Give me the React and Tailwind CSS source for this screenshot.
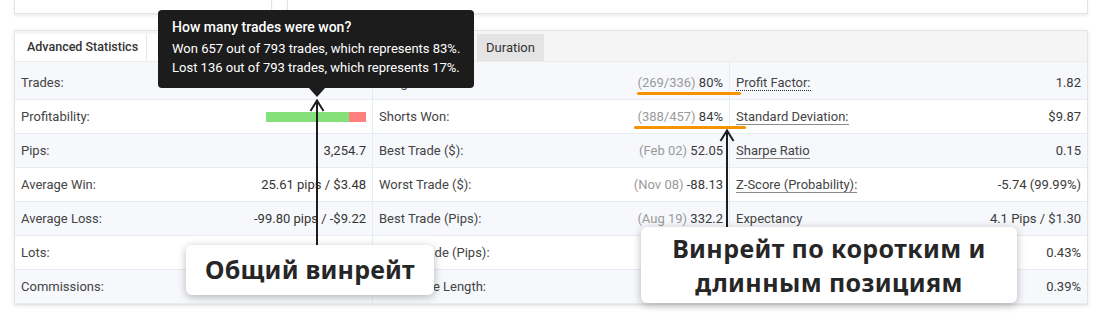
import React from 'react';

const leftRows = [
  { label: 'Trades:', value: '' },
  { label: 'Profitability:', bar: true },
  { label: 'Pips:', value: '3,254.7' },
  { label: 'Average Win:', value: '25.61 pips / $3.48' },
  { label: 'Average Loss:', value: '-99.80 pips / -$9.22' },
  { label: 'Lots:', value: '' },
  { label: 'Commissions:', value: '' },
];

const midRows = [
  { label: 'Longs Won:', note: '(269/336)', value: '80%' },
  { label: 'Shorts Won:', note: '(388/457)', value: '84%' },
  { label: 'Best Trade ($):', note: '(Feb 02)', value: '52.05' },
  { label: 'Worst Trade ($):', note: '(Nov 08)', value: '-88.13' },
  { label: 'Best Trade (Pips):', note: '(Aug 19)', value: '332.2' },
  { label: 'Worst Trade (Pips):', note: '', value: '' },
  { label: 'Avg. Trade Length:', note: '', value: '' },
];

const rightRows = [
  { label: 'Profit Factor:', value: '1.82', line: 'dotted' },
  { label: 'Standard Deviation:', value: '$9.87', line: 'solid' },
  { label: 'Sharpe Ratio', value: '0.15', line: 'solid' },
  { label: 'Z-Score (Probability):', value: '-5.74 (99.99%)', line: 'solid' },
  { label: 'Expectancy', value: '4.1 Pips / $1.30' },
  { label: '', value: '0.43%' },
  { label: '', value: '0.39%' },
];

const Row = ({ i, children }) => (
  <div
    className={`flex items-center justify-between px-[6px] border-b border-[#e7ebf2] ${
      i === 0 ? 'h-[38px] pt-[4px]' : 'h-[34px]'
    } ${i % 2 === 0 ? 'bg-[#f6f8fc]' : 'bg-white'}`}
  >
    {children}
  </div>
);

const Label = ({ text, line }) => {
  if (line === 'dotted')
    return <span className="border-b border-dotted border-[#333] leading-[15px]">{text}</span>;
  if (line === 'solid')
    return <span className="border-b border-[#8a8a8a] leading-[15px]">{text}</span>;
  return <span>{text}</span>;
};

const Arrow = ({ className, height }) => (
  <svg className={className} width="16" height={height} viewBox={`0 0 16 ${height}`}>
    <line x1="8" y1="1" x2="8" y2={height} stroke="#1e1e1e" strokeWidth="2" />
    <polyline points="1.5,12 8,1.5 14.5,12" fill="none" stroke="#1e1e1e" strokeWidth="2" />
  </svg>
);

export default function App() {
  return (
    <div className="relative w-[1094px] h-[316px] bg-white overflow-hidden font-['Roboto',sans-serif] text-[13px] text-[#444]">
      {/* cards above, cut off */}
      <div className="flex gap-[15px] pl-[14px] h-[14px]">
        <div className="w-[258px] bg-white border-x border-b border-[#e4e4e4] shadow-[0_2px_3px_rgba(0,0,0,0.08)]" />
        <div className="w-[801px] bg-white border-x border-b border-[#e4e4e4] shadow-[0_2px_3px_rgba(0,0,0,0.08)]" />
      </div>

      {/* stats panel */}
      <div className="ml-[14px] mt-[16px] w-[1074px] border border-[#e4e4e4] bg-white shadow-[0_1px_4px_rgba(0,0,0,0.1)]">
        <div className="flex items-end h-[31px] bg-[#f5f5f5] border-b border-[#ececec]">
          <div className="h-[27px] w-[132px] flex items-center pl-[12px] bg-white border-r border-[#e8e8e8] text-[#333] text-[12.5px] font-medium">
            Advanced Statistics
          </div>
          <div className="h-[27px] w-[80px] flex items-center pl-[11px] bg-white text-[#333]">Trades</div>
          <div className="h-[27px] w-[250px]" />
          <div className="h-[27px] w-[67px] flex items-center justify-center bg-[#e4e4e4] text-[#333]">Duration</div>
        </div>

        <div className="grid grid-cols-[357px_357px_358px]">
          <div>
            {leftRows.map((r, i) => (
              <Row key={r.label} i={i}>
                <span>{r.label}</span>
                {r.bar ? (
                  <div className="flex w-[100px] h-[10px]">
                    <div className="w-[83px] bg-[#86e07a]" />
                    <div className="flex-1 bg-[#ff7f7f]" />
                  </div>
                ) : (
                  <span className="text-[#333]">{r.value}</span>
                )}
              </Row>
            ))}
          </div>
          <div className="border-l border-[#e7ebf2]">
            {midRows.map((r, i) => (
              <Row key={r.label} i={i}>
                <span>{r.label}</span>
                {r.value && (
                  <span className="text-[#3a3a3a]">
                    <span className="text-[#9a9a9a]">{r.note}</span> {r.value}
                  </span>
                )}
              </Row>
            ))}
          </div>
          <div className="border-l border-[#e7ebf2]">
            {rightRows.map((r, i) => (
              <Row key={i} i={i}>
                <Label text={r.label} line={r.line} />
                <span className="text-[#3a3a3a]">{r.value}</span>
              </Row>
            ))}
          </div>
        </div>
      </div>

      {/* orange highlights */}
      <div className="absolute left-[637px] top-[92px] w-[104px] h-[3px] rounded-full bg-[#f59300]" />
      <div className="absolute left-[634px] top-[126px] w-[112px] h-[3px] rounded-full bg-[#f59300]" />

      {/* pointers */}
      <Arrow className="absolute left-[309px] top-[99px]" height={146} />
      <Arrow className="absolute left-[719px] top-[129px]" height={98} />

      {/* tooltip */}
      <div className="absolute left-[158px] top-[10px] w-[316px] h-[78px] rounded-[4px] bg-[#1c1c1c] px-[14px] pt-[8px] text-white whitespace-nowrap">
        <div className="text-[14px] font-medium leading-[19px]">How many trades were won?</div>
        <div className="text-[13px] leading-[19px] mt-[2px]">Won 657 out of 793 trades, which represents 83%.</div>
        <div className="text-[13px] leading-[19px]">Lost 136 out of 793 trades, which represents 17%.</div>
      </div>
      <div className="absolute left-[309px] top-[88px] w-0 h-0 border-l-[8px] border-r-[8px] border-t-[9px] border-l-transparent border-r-transparent border-t-[#1c1c1c]" />

      {/* callouts */}
      <div className="absolute left-[186px] top-[245px] w-[248px] h-[50px] rounded-[6px] bg-white shadow-[0_2px_8px_rgba(0,0,0,0.28)] flex items-center justify-center font-['Noto_Sans',sans-serif] font-bold text-[25px] tracking-[0.2px] text-[#262626]">
        Общий винрейт
      </div>
      <div className="absolute left-[641px] top-[227px] w-[376px] h-[76px] rounded-[6px] bg-white shadow-[0_2px_8px_rgba(0,0,0,0.28)] flex flex-col items-center justify-center font-['Noto_Sans',sans-serif] font-bold text-[25px] tracking-[0.4px] leading-[34px] text-[#262626]">
        <div>Винрейт по коротким и</div>
        <div>длинным позициям</div>
      </div>
    </div>
  );
}
